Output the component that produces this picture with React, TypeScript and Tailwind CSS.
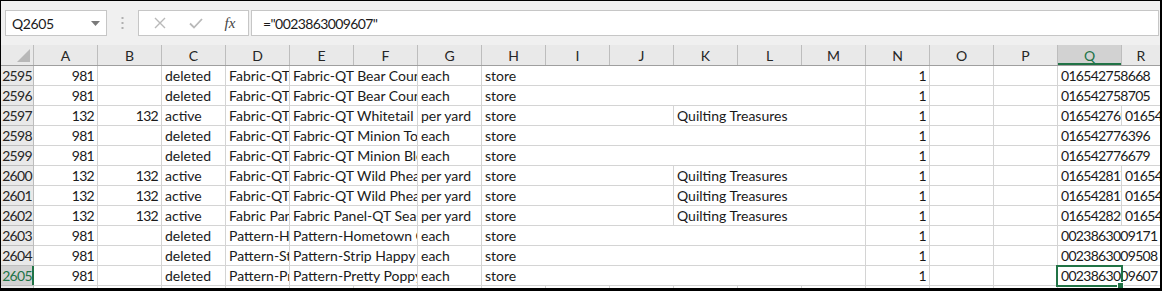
import React from 'react';

const COLS = ['A', 'B', 'C', 'D', 'E', 'F', 'G', 'H', 'I', 'J', 'K', 'L', 'M', 'N', 'O', 'P', 'Q', 'R'];
const WIDTHS = COLS.map((c) => (c === 'R' ? 38 : 64));

type Row = { n: number; cells: string[] };

// A..R, blank = empty cell
const ROWS: Row[] = [
  { n: 2595, cells: ['981', '', 'deleted', 'Fabric-QT Bear Country', 'Fabric-QT Bear Country Panel', '', 'each', 'store', '', '', '', '', '', '1', '', '', '016542758668', ''] },
  { n: 2596, cells: ['981', '', 'deleted', 'Fabric-QT Bear Country', 'Fabric-QT Bear Country Stripe', '', 'each', 'store', '', '', '', '', '', '1', '', '', '016542758705', ''] },
  { n: 2597, cells: ['132', '132', 'active', 'Fabric-QT Whitetail', 'Fabric-QT Whitetail Ridge', '', 'per yard', 'store', '', '', 'Quilting Treasures', '', '', '1', '', '', '016542769112', '016542769112'] },
  { n: 2598, cells: ['981', '', 'deleted', 'Fabric-QT Minion', 'Fabric-QT Minion Toss', '', 'each', 'store', '', '', '', '', '', '1', '', '', '016542776396', ''] },
  { n: 2599, cells: ['981', '', 'deleted', 'Fabric-QT Minion', 'Fabric-QT Minion Blender', '', 'each', 'store', '', '', '', '', '', '1', '', '', '016542776679', ''] },
  { n: 2600, cells: ['132', '132', 'active', 'Fabric-QT Wild', 'Fabric-QT Wild Pheasant', '', 'per yard', 'store', '', '', 'Quilting Treasures', '', '', '1', '', '', '016542817105', '016542817105'] },
  { n: 2601, cells: ['132', '132', 'active', 'Fabric-QT Wild', 'Fabric-QT Wild Pheasant', '', 'per yard', 'store', '', '', 'Quilting Treasures', '', '', '1', '', '', '016542817174', '016542817174'] },
  { n: 2602, cells: ['132', '132', 'active', 'Fabric Panel-QT', 'Fabric Panel-QT Seasons', '', 'per yard', 'store', '', '', 'Quilting Treasures', '', '', '1', '', '', '016542829016', '016542829016'] },
  { n: 2603, cells: ['981', '', 'deleted', 'Pattern-Hometown', 'Pattern-Hometown Quilt', '', 'each', 'store', '', '', '', '', '', '1', '', '', '0023863009171', ''] },
  { n: 2604, cells: ['981', '', 'deleted', 'Pattern-Strip Happy', 'Pattern-Strip Happy Quilts', '', 'each', 'store', '', '', '', '', '', '1', '', '', '0023863009508', ''] },
  { n: 2605, cells: ['981', '', 'deleted', 'Pattern-Pretty Poppy', 'Pattern-Pretty Poppy Quilt', '', 'each', 'store', '', '', '', '', '', '1', '', '', '0023863009607', ''] },
];

const isNum = (v: string) => /^\d+$/.test(v) && v.length < 6;
const isDigits = (v: string) => /^\d+$/.test(v);

type Seg = { text: string; width: number; right: boolean; last: boolean };

function segments(cells: string[]): Seg[] {
  const out: Seg[] = [];
  let i = 0;
  while (i < cells.length) {
    const v = cells[i];
    let j = i + 1;
    if (v && !isNum(v)) {
      while (j < cells.length && cells[j] === '') j++;
    }
    let width = 0;
    for (let k = i; k < j; k++) width += WIDTHS[k];
    out.push({ text: v, width, right: isNum(v), last: j === cells.length });
    i = j;
  }
  return out;
}

const FONT = "font-['Lato','Liberation_Sans',sans-serif]";

export default function App() {
  return (
    <div className={`w-[1162px] h-[291px] overflow-hidden border-t border-l border-r-2 border-b-[3px] border-black bg-white text-[#1a1a1a] ${FONT}`}>
      {/* Formula bar */}
      <div className="h-[44px] bg-[#f0f0f0] flex items-start pt-[9px] pl-[4px] pr-[1px]">
        <div className="w-[102px] h-[26px] border border-[#c6c6c6] bg-white flex items-center justify-between pl-[6px] pr-[6px]">
          <span className="text-[14px] tracking-[-0.4px]">Q2605</span>
          <svg width="9" height="5" viewBox="0 0 9 5"><path d="M0 0h9L4.5 5z" fill="#7a7a7a" /></svg>
        </div>
        <div className="w-[31px] h-[26px] flex items-center justify-center">
          <svg width="3" height="12" viewBox="0 0 3 12">
            <rect x="0.5" y="0" width="2" height="2" fill="#b0b0b0" />
            <rect x="0.5" y="5" width="2" height="2" fill="#b0b0b0" />
            <rect x="0.5" y="10" width="2" height="2" fill="#b0b0b0" />
          </svg>
        </div>
        <div className="w-[111px] h-[26px] border border-[#c6c6c6] bg-white flex items-center">
          <div className="w-[40px] flex justify-center pl-[2px]">
            <svg width="12" height="12" viewBox="0 0 12 12"><path d="M1 1l10 10M11 1L1 11" stroke="#b9b9b9" strokeWidth="1.4" /></svg>
          </div>
          <div className="w-[34px] flex justify-center">
            <svg width="14" height="11" viewBox="0 0 14 11"><path d="M1 5.5l4 4L13 1" stroke="#b9b9b9" strokeWidth="1.8" fill="none" /></svg>
          </div>
          <div className="w-[34px] flex justify-center">
            <span className="font-['Liberation_Serif',serif] italic text-[15px] text-[#444]">fx</span>
          </div>
        </div>
        <div className="ml-[2px] flex-1 h-[26px] border border-[#c6c6c6] bg-white flex items-center pl-[11px]">
          <span className="text-[14px] tracking-[-0.6px]">="0023863009607"</span>
        </div>
      </div>

      {/* Column headers */}
      <div className="h-[21px] flex bg-[#e9e9e9] border-b border-[#9f9f9f]">
        <div className="w-[33px] shrink-0 border-r border-[#bdbdbd] relative">
          <svg className="absolute right-[3px] bottom-[3px]" width="13" height="13" viewBox="0 0 13 13"><path d="M13 0V13H0z" fill="#b8b8b8" /></svg>
        </div>
        {COLS.map((c, i) => {
          const sel = c === 'Q';
          return (
            <div
              key={c}
              style={{ width: WIDTHS[i] }}
              className={[
                'shrink-0 flex items-center justify-center text-[14px] relative',
                c === 'R' ? '' : 'border-r border-[#bdbdbd]',
                sel ? 'bg-[#d2d2d2] text-[#217346]' : 'text-[#262626]',
              ].join(' ')}
            >
              {c}
              {sel && <div className="absolute left-0 right-0 bottom-0 h-[2px] bg-[#217346]" />}
            </div>
          );
        })}
      </div>

      {/* Rows */}
      <div>
        {ROWS.map((row) => {
          const sel = row.n === 2605;
          return (
            <div key={row.n} className="h-[20px] flex relative">
              <div
                className={[
                  'w-[33px] shrink-0 flex items-center justify-center text-[14px] tracking-[-0.7px] border-b border-r border-[#bdbdbd] relative',
                  sel ? 'bg-[#d2d2d2] text-[#217346]' : 'bg-[#e9e9e9] text-[#262626]',
                ].join(' ')}
              >
                {row.n}
                {sel && <div className="absolute top-0 bottom-0 right-[-1px] w-[2px] bg-[#217346]" />}
              </div>
              {segments(row.cells).map((s, k) => (
                <div
                  key={k}
                  style={{ width: s.width }}
                  className={[
                    'shrink-0 flex items-center overflow-hidden whitespace-nowrap text-[14px] border-b border-[#d4d4d4]',
                    s.last ? '' : 'border-r',
                    s.right ? 'justify-end pr-[3px]' : 'pl-[3px]',
                    isDigits(s.text) ? 'tracking-[-0.7px]' : '',
                  ].join(' ')}
                >
                  {s.text}
                </div>
              ))}
              {sel && (
                <>
                  <div className="absolute left-[1055px] top-[-1px] w-[67px] h-[22px] border-2 border-[#217346]" />
                  <div className="absolute left-[1116px] top-[16px] w-[7px] h-[7px] bg-[#217346] border border-white" />
                </>
              )}
            </div>
          );
        })}
        <div className="h-[2px] flex">
          <div className="w-[33px] bg-[#e9e9e9] border-r border-[#bdbdbd]" />
          {COLS.map((c, i) => (
            <div key={c} style={{ width: WIDTHS[i] }} className={c === 'R' ? '' : 'border-r border-[#d4d4d4]'} />
          ))}
        </div>
      </div>
    </div>
  );
}
